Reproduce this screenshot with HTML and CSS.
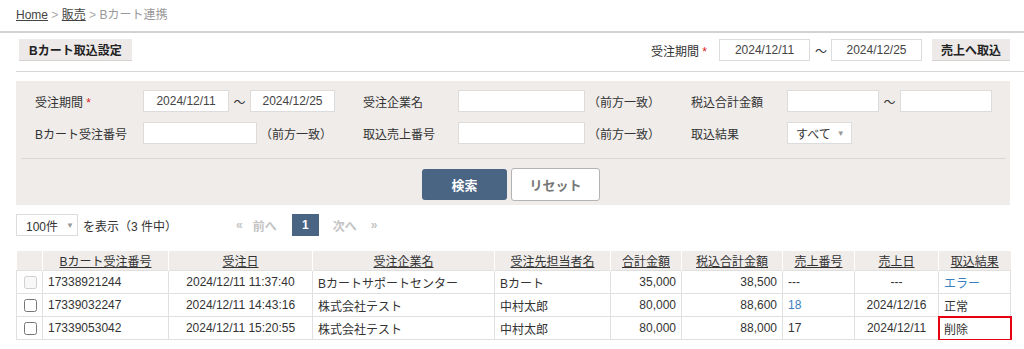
FILE: index.html
```html
<!DOCTYPE html>
<html lang="ja">
<head>
  <meta charset="UTF-8" />
  <title>Bカート連携</title>
  <link rel="stylesheet" href="styles.css">
</head>
<body>
  <div class="breadcrumb">
    <a href="#">Home</a> <span class="sep">&gt;</span> <a href="#">販売</a> <span class="sep">&gt;</span> <span class="current">Bカート連携</span>
  </div>

  <div class="toolbar">
    <button class="btn-gray">Bカート取込設定</button>
    <div class="import">
      <span class="label">受注期間 <span class="req">*</span></span>
      <input class="date" type="text" value="2024/12/11">
      <span class="tilde">〜</span>
      <input class="date" type="text" value="2024/12/25">
      <button class="btn-gray">売上へ取込</button>
    </div>
  </div>

  <div class="search-panel">
    <div class="search-grid">
      <div class="label">受注期間 <span class="req">*</span></div>
      <div class="field">
        <input class="date d1" type="text" value="2024/12/11">
        <span class="tilde">〜</span>
        <input class="date d2" type="text" value="2024/12/25">
      </div>
      <div class="label">受注企業名</div>
      <div class="field"><input class="w127" type="text"><span class="note">（前方一致）</span></div>
      <div class="label">税込合計金額</div>
      <div class="field">
        <input class="w92" type="text">
        <span class="tilde">〜</span>
        <input class="w92" type="text">
      </div>

      <div class="label">Bカート受注番号</div>
      <div class="field"><input class="w114" type="text"><span class="note">（前方一致）</span></div>
      <div class="label">取込売上番号</div>
      <div class="field"><input class="w127" type="text"><span class="note">（前方一致）</span></div>
      <div class="label">取込結果</div>
      <div class="field"><div class="select result-select">すべて<span class="arrow">▼</span></div></div>
    </div>
    <div class="search-actions">
      <button class="btn-search">検索</button>
      <button class="btn-reset">リセット</button>
    </div>
  </div>

  <div class="pager-row">
    <div class="select per-page">100件<span class="arrow">▼</span></div>
    <span class="count">を表示（3 件中）</span>
    <div class="pager">
      <span class="off first">«</span>
      <span class="off">前へ</span>
      <span class="page">1</span>
      <span class="off">次へ</span>
      <span class="off last">»</span>
    </div>
  </div>

  <table class="result">
    <colgroup>
      <col style="width:26px"><col style="width:126px"><col style="width:144px"><col style="width:182px"><col style="width:116px">
      <col style="width:71px"><col style="width:101px"><col style="width:72px"><col style="width:84px"><col style="width:72px">
    </colgroup>
    <thead>
      <tr>
        <th></th>
        <th><a href="#">Bカート受注番号</a></th>
        <th><a href="#">受注日</a></th>
        <th><a href="#">受注企業名</a></th>
        <th><a href="#">受注先担当者名</a></th>
        <th><a href="#">合計金額</a></th>
        <th><a href="#">税込合計金額</a></th>
        <th><a href="#">売上番号</a></th>
        <th><a href="#">売上日</a></th>
        <th><a href="#">取込結果</a></th>
      </tr>
    </thead>
    <tbody>
      <tr>
        <td class="chk"><input type="checkbox" disabled></td>
        <td>17338921244</td>
        <td class="center">2024/12/11 11:37:40</td>
        <td>Bカートサポートセンター</td>
        <td>Bカート</td>
        <td class="num">35,000</td>
        <td class="num">38,500</td>
        <td>---</td>
        <td class="center">---</td>
        <td><a class="link" href="#">エラー</a></td>
      </tr>
      <tr>
        <td class="chk"><input type="checkbox"></td>
        <td>17339032247</td>
        <td class="center">2024/12/11 14:43:16</td>
        <td>株式会社テスト</td>
        <td>中村太郎</td>
        <td class="num">80,000</td>
        <td class="num">88,600</td>
        <td><a class="link" href="#">18</a></td>
        <td class="center">2024/12/16</td>
        <td>正常</td>
      </tr>
      <tr>
        <td class="chk"><input type="checkbox"></td>
        <td>17339053042</td>
        <td class="center">2024/12/11 15:20:55</td>
        <td>株式会社テスト</td>
        <td>中村太郎</td>
        <td class="num">80,000</td>
        <td class="num">88,000</td>
        <td>17</td>
        <td class="center">2024/12/11</td>
        <td class="marked">削除</td>
      </tr>
    </tbody>
  </table>
</body>
</html>
```

FILE: styles.css
```css
body {
  margin: 0;
  font-family: "Liberation Sans", "Noto Sans CJK JP", sans-serif;
  font-size: 12px;
  color: #333;
}
input, button {
  font-family: inherit;
  font-size: 12px;
}
input[type="text"] {
  box-sizing: border-box;
  height: 22px;
  margin: 0;
  padding: 0 4px;
  border: 1px solid #dcdcdc;
  background: #fff;
  color: #444;
}
.breadcrumb {
  height: 31px;
  line-height: 31px;
  padding-left: 16px;
  border-bottom: 2px solid #d2d2d2;
  color: #aaa;
}
.breadcrumb a {
  color: #444;
}
.breadcrumb .current {
  color: #999;
}
.toolbar {
  display: flex;
  justify-content: space-between;
  align-items: center;
  margin-left: 16px;
  padding: 6px 14px 10px 3px;
  border-bottom: 1px solid #d8d8d8;
}
.import {
  display: flex;
  align-items: center;
}
.import .label {
  margin-right: 12px;
}
.import .date {
  width: 91px;
  text-align: center;
}
.import .tilde {
  margin: 0 4px 0 5px;
}
.import .btn-gray {
  margin-left: 10px;
  width: 78px;
  padding: 0;
}
.btn-gray {
  height: 22px;
  padding: 0 10px;
  border: none;
  border-bottom: 1px solid #d6d2d1;
  background: #ece9e8;
  color: #222;
  font-weight: bold;
  white-space: nowrap;
}
.req {
  color: #e02020;
}
.search-panel {
  margin: 9px 14px 0 16px;
  background: #efecea;
}
.search-grid {
  display: grid;
  grid-template-columns: 108px 220px 95px 233px 96px 1fr;
  row-gap: 10px;
  align-items: center;
  padding: 9px 19px 14px;
}
.field {
  display: flex;
  align-items: center;
}
.field .tilde {
  width: 21px;
  text-align: center;
}
.field .date {
  text-align: center;
}
.d1 { width: 86px; }
.d2 { width: 85px; }
.w92 { width: 92px; }
.w114 { width: 114px; }
.w127 { width: 127px; }
.note {
  margin-left: 3px;
}
.select {
  box-sizing: border-box;
  display: inline-flex;
  align-items: center;
  height: 22px;
  padding: 0 8px;
  border: 1px solid #dcdcdc;
  background: #fff;
  white-space: nowrap;
}
.result-select {
  width: 65px;
}
.arrow {
  font-size: 8px;
  color: #999;
  margin-left: 6px;
}
.search-actions {
  display: flex;
  align-items: center;
  gap: 4px;
  margin: 0 4px 0 5px;
  padding: 9px 0 4px 401px;
  border-top: 1px solid #dcd8d6;
}
.btn-search {
  width: 85px;
  height: 31px;
  border: none;
  border-radius: 3px;
  background: #4a6584;
  color: #fff;
  font-weight: bold;
  font-size: 13px;
}
.btn-reset {
  width: 89px;
  height: 33px;
  border: 1px solid #b4b4b4;
  border-radius: 3px;
  background: #fff;
  color: #777;
  font-weight: bold;
  font-size: 13px;
}
.pager-row {
  display: flex;
  align-items: center;
  margin: 9px 0 0 16px;
}
.per-page {
  width: 62px;
  padding-left: 9px;
}
.per-page .arrow {
  margin-left: 8px;
}
.count {
  margin-left: 5px;
}
.pager {
  display: flex;
  align-items: center;
  margin-left: 59px;
}
.pager .off {
  color: #c4c4c4;
  font-weight: bold;
}
.pager .first {
  margin-right: 10px;
}
.pager .last {
  margin-left: 14px;
}
.pager .page {
  display: inline-block;
  width: 27px;
  height: 22px;
  line-height: 22px;
  margin: 0 14px 0 15px;
  text-align: center;
  background: #4a6584;
  color: #fff;
  font-weight: bold;
}
table.result {
  margin: 15px 0 0 16px;
  width: 994px;
  border-collapse: collapse;
  table-layout: fixed;
}
.result th {
  height: 19px;
  padding: 0;
  background: #efecea;
  border-left: 1px solid #fff;
  font-weight: normal;
  text-align: center;
}
.result th:first-child {
  border-left: none;
}
.result th a {
  color: #333;
}
.result td {
  height: 22px;
  padding: 0 5px;
  border: 1px solid #e0e0e0;
  white-space: nowrap;
}
.result td.chk {
  padding: 0 0 0 3px;
}
.chk input {
  margin: 0 0 0 4px;
  vertical-align: middle;
}
.result td.center {
  text-align: center;
}
.result td.num {
  text-align: right;
}
.link {
  color: #3a7fc1;
  text-decoration: none;
}
.result td.marked {
  outline: 2px solid #e60012;
  outline-offset: -1px;
}
```
